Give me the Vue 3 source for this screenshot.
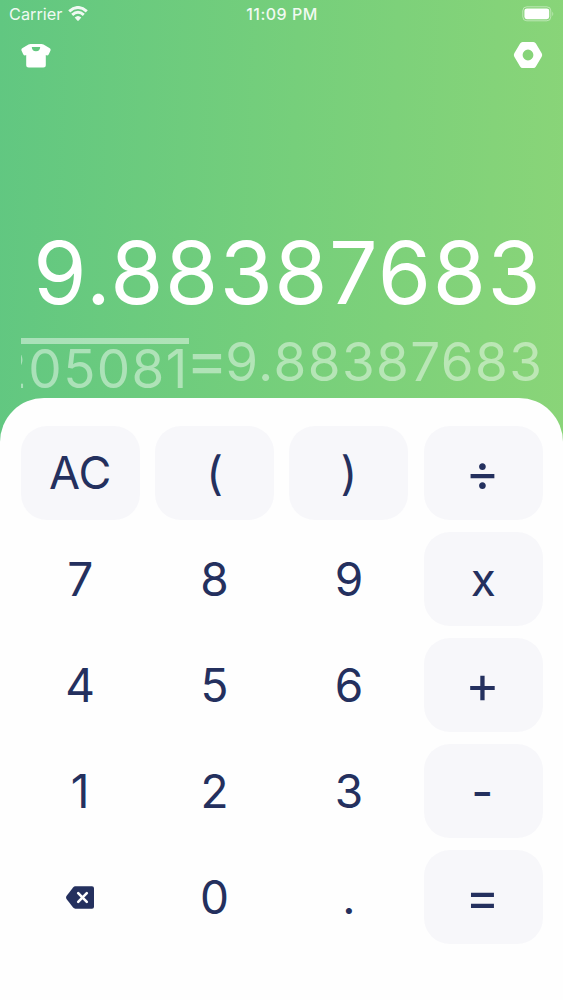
<template>
    <div class="calculator">
        <header class="status-bar">
            <div class="network">
                <span class="carrier">Carrier</span>
                <svg class="wifi" viewBox="0 0 20 15" aria-hidden="true">
                    <path d="M1.2 5.3Q10-2.3 18.8 5.3M4.2 8.8Q10 3.8 15.8 8.8" />
                    <path class="wifi-dot" d="M6.7 11.6Q10 8.6 13.3 11.6L10.8 14.4Q10 15.1 9.2 14.4Z" />
                </svg>
            </div>
            <span class="time">11:09 PM</span>
            <svg class="battery" viewBox="0 0 33 16" aria-hidden="true">
                <rect class="battery-case" x="0.8" y="0.8" width="28" height="14" rx="4" />
                <rect x="2.4" y="2.4" width="24.8" height="10.8" rx="2.4" />
                <path class="battery-cap" d="M30.3 5.4Q32.2 7.8 30.3 10.2Z" />
            </svg>
        </header>

        <nav class="toolbar">
            <button class="tool" aria-label="Themes">
                <svg class="shirt" viewBox="0 0 30 24" aria-hidden="true">
                    <path fill-rule="evenodd"
                        d="M7.5 0.5Q8.4 0 9.5 0H20.5Q21.6 0 22.5 0.5L28.4 3.9Q30.2 5 29.4 6.7L27.8 10.2Q27 11.7 25.4 11.3L24.8 11.1V21Q24.8 23.5 22.3 23.5H7.7Q5.2 23.5 5.2 21V11.1L4.6 11.3Q3 11.7 2.2 10.2L0.6 6.7Q-0.2 5 1.6 3.9ZM10.8 3Q11 7.2 15 7.2Q19 7.2 19.2 3Z" />
                </svg>
            </button>
            <button class="tool" aria-label="Settings">
                <svg class="nut" viewBox="0 0 30 26" aria-hidden="true">
                    <path fill-rule="evenodd"
                        d="M9.6 0H20.4Q22 0 22.9 1.5L28.7 11.3Q29.7 13 28.7 14.7L22.9 24.5Q22 26 20.4 26H9.6Q8 26 7.1 24.5L1.3 14.7Q0.3 13 1.3 11.3L7.1 1.5Q8 0 9.6 0ZM15 7.6A5.4 5.4 0 1 0 15 18.4A5.4 5.4 0 1 0 15 7.6Z" />
                </svg>
            </button>
        </nav>

        <main class="display">
            <div class="result">{{ result }}</div>
            <div class="expression">
                <span class="denominator">{{ denominator }}</span>
                <span class="equals">=</span>
                <span class="answer">{{ result }}</span>
            </div>
        </main>

        <section class="keypad">
            <button v-for="key in keys" :key="key.label" class="key" :class="[{ 'is-filled': key.filled }, key.name]">
                <svg v-if="key.name === 'delete'" class="backspace" viewBox="0 0 28 23" aria-label="Delete">
                    <path
                        d="M9.3 0.3H26Q28 0.3 28 2.3V20.7Q28 22.7 26 22.7H9.3Q8 22.7 7.1 21.6L0.5 13Q-0.4 11.5 0.5 10L7.1 1.4Q8 0.3 9.3 0.3Z" />
                    <path class="cross" d="M12.2 7.2L20.8 15.8M20.8 7.2L12.2 15.8" />
                </svg>
                <span v-else>{{ key.label }}</span>
            </button>
        </section>
    </div>
</template>

<script setup>
const result = '9.88387683';
const denominator = '205081';

const keys = [
    { label: 'AC', name: 'clear', filled: true },
    { label: '(', name: 'paren', filled: true },
    { label: ')', name: 'paren', filled: true },
    { label: '÷', name: 'operator', filled: true },
    { label: '7' },
    { label: '8' },
    { label: '9' },
    { label: 'x', filled: true },
    { label: '4' },
    { label: '5' },
    { label: '6' },
    { label: '+', name: 'operator', filled: true },
    { label: '1' },
    { label: '2' },
    { label: '3' },
    { label: '-', name: 'minus', filled: true },
    { label: 'delete', name: 'delete' },
    { label: '0' },
    { label: '.' },
    { label: '=', name: 'operator', filled: true }
];
</script>

<style>
body {
    margin: 0;
}
</style>

<style scoped>
.calculator {
    display: flex;
    flex-direction: column;
    width: 563px;
    height: 1000px;
    overflow: hidden;
    background: linear-gradient(92deg, #61c781 0%, #76cf7b 50%, #8bd578 100%);
    color: #fff;
    font-family: Inter, "Liberation Sans", sans-serif;
}

button {
    padding: 0;
    border: 0;
    background: none;
    color: inherit;
    font: inherit;
}

svg {
    display: block;
    fill: #fff;
}

.status-bar {
    display: grid;
    grid-template-columns: 1fr auto 1fr;
    align-items: center;
    height: 29px;
    padding: 0 8px 0 9px;
    box-sizing: border-box;
    font-size: 16.3px;
    line-height: 29px;
}

.network {
    display: flex;
    align-items: center;
    gap: 6px;
    opacity: 0.9;
}

.wifi {
    width: 20px;
    height: 15px;
    margin-top: -2px;
    stroke: #fff;
    stroke-width: 3;
    fill: none;
}

.wifi .wifi-dot {
    fill: #fff;
    stroke: none;
}

.time {
    font-weight: 500;
    font-size: 16px;
    letter-spacing: 0.5px;
    opacity: 0.9;
}

.battery {
    justify-self: end;
    width: 33px;
    height: 16px;
    margin-top: -1px;
}

.battery-case {
    fill: none;
    stroke: #fff;
    stroke-opacity: 0.45;
}

.battery-cap {
    fill-opacity: 0.45;
}

.toolbar {
    display: flex;
    justify-content: space-between;
    align-items: center;
    height: 52px;
    padding: 0 20.5px;
}

.shirt {
    width: 30px;
    height: 24px;
    margin-top: 1px;
}

.nut {
    width: 30px;
    height: 26px;
}

.display {
    display: flex;
    flex-direction: column;
    align-items: flex-end;
    height: 317px;
    padding: 0 21px;
}

.result {
    margin-top: 142px;
    font-size: 86px;
    letter-spacing: 1.5px;
    line-height: 100px;
    white-space: nowrap;
}

.expression {
    display: flex;
    justify-content: flex-end;
    width: 521px;
    height: 60px;
    margin-top: 15px;
    overflow: hidden;
    color: rgba(255, 255, 255, 0.45);
    font-size: 53px;
    line-height: 48px;
    white-space: nowrap;
}

.denominator {
    height: 50px;
    border-top: 6px solid rgba(255, 255, 255, 0.45);
    letter-spacing: 1.4px;
    line-height: 51px;
}

.equals {
    margin: 0 -3px;
    font-size: 64px;
    line-height: 42px;
}

.answer {
    margin-right: -1.4px;
    letter-spacing: 1.4px;
}

.keypad {
    display: grid;
    grid-template-columns: repeat(4, 119px);
    grid-auto-rows: 94.4px;
    gap: 11.7px 15.4px;
    flex: 1;
    align-content: start;
    padding: 27.6px 21px 0 20.7px;
    border-radius: 44px 44px 0 0;
    background: #fefefe;
    color: #24305e;
}

.key {
    display: flex;
    justify-content: center;
    align-items: center;
    border-radius: 26px;
    font-size: 46px;
    line-height: 1;
}

.key.is-filled {
    background: #f7f7fa;
}

.key.clear {
    font-size: 45px;
}

.key.operator {
    padding-right: 2px;
    font-size: 52px;
}

.key.minus {
    padding: 2px 2px 0 0;
    font-size: 48px;
}

.backspace {
    width: 28px;
    height: 23px;
    margin-right: 1px;
    fill: #24305e;
}

.cross {
    stroke: #fff;
    stroke-width: 2.6;
    stroke-linecap: round;
}
</style>
